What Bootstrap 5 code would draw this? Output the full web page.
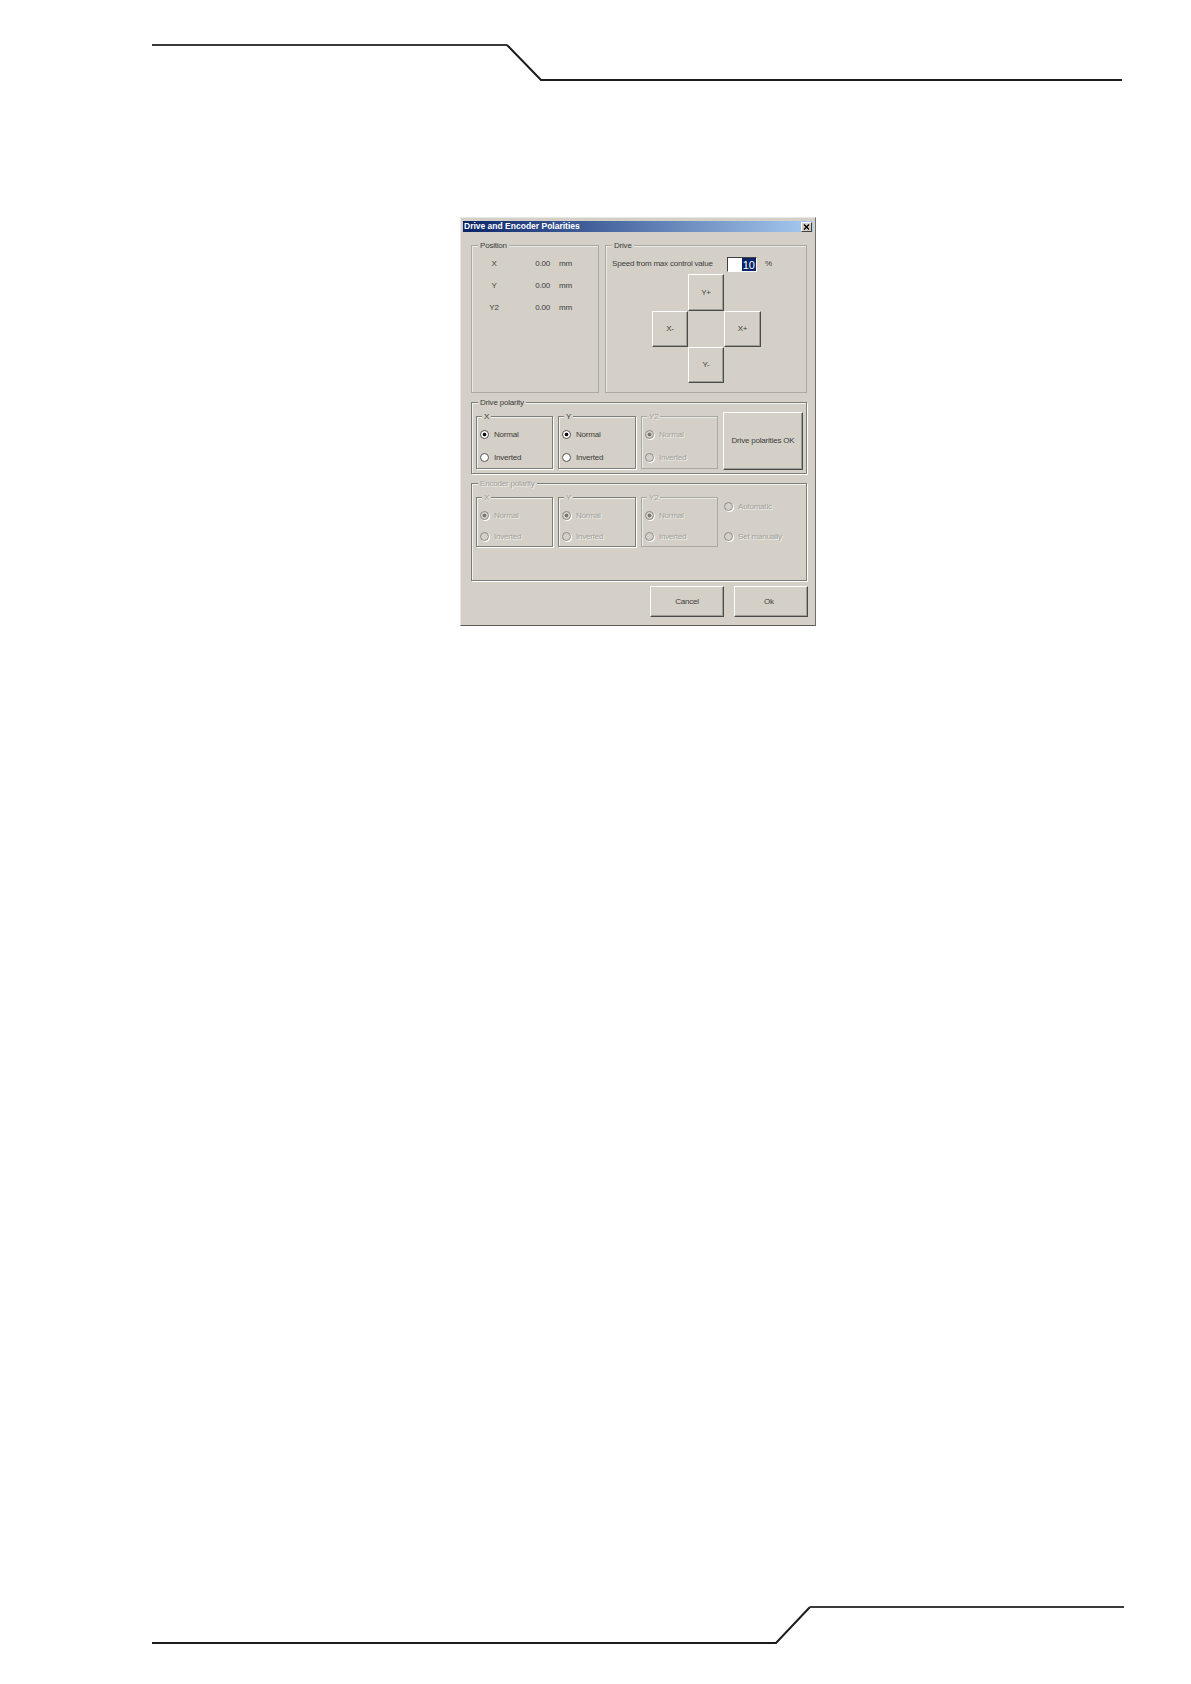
<!DOCTYPE html>
<html lang="en">
<head>
<meta charset="utf-8">
<title>Drive and Encoder Polarities</title>
<link href="https://cdn.jsdelivr.net/npm/bootstrap@5.3.0/dist/css/bootstrap.min.css" rel="stylesheet">
<style>
body{background:#fff;font-family:"Liberation Sans",Arial,sans-serif;font-size:8px;letter-spacing:-.2px;line-height:10px;color:#3c3c3a;min-height:1684px}
.deco{display:block;flex:none}
.deco-top{width:1191px;height:100px}
.deco-bottom{width:1191px;height:84px;margin-top:auto}
.win{width:356px;height:409px;margin:117px 0 0 460px;background:#d4d0c8;border:1px solid;border-color:#e9e8e3 #6e6e6a #5c5c58 #e9e8e3;padding:3px 2px 0}
.win-title{height:11px;background:linear-gradient(90deg,#0a246a,#a6caf0);color:#fff;font-weight:700;font-size:8.5px;letter-spacing:0;line-height:10px;padding-right:1px}
.win-title-text{padding:0 0 2px 1px}
.win-x{width:11px;height:10px;background:#d4d0c8;border:1px solid;border-color:#fff #404040 #404040 #fff;color:#000}
.win-body{padding:13px 6px 0 8px}
.grp{flex:none;border:1px solid #7d7d78;box-shadow:1px 1px 0 #fff,inset 1px 1px 0 #f2f1ed}
.grp-soft{border-color:#a9a8a1;box-shadow:inset 1px 1px 0 #eceae5}
.grp-title{display:block;width:fit-content;height:10px;margin:-6px 0 0 6px;padding:1px 2px 0;background:#d4d0c8}
.pos{width:128px;height:148px}
.drv{width:202px;height:148px}
.pos-row{height:22px}
.pos-name{width:44px}
.pos-val{width:34px;margin-right:9px}
.rows{margin-top:3px}
.speed{height:16px;margin:6px 0 0 6px}
.speed-label{width:115px}
.speed-input{width:30px;height:15px;background:#fff;border:1px solid;border-color:#404040 #fff #fff #404040;margin-right:8px}
.speed-sel{background:#0a246a;color:#fff;font-size:11px;letter-spacing:0;padding:0 1px 0 1px;line-height:14px}
.cross{display:grid;grid-template-columns:36px 36px 37px;grid-template-rows:37px 36px 36px;margin:2px 0 0 46px;width:fit-content}
.wbtn{background:#d4d0c8;border:1px solid;border-color:#fff #4a4a48 #4a4a48 #fff;border-radius:0;color:#3c3c3a;font-size:8px;letter-spacing:-.2px;line-height:10px;padding:0;box-shadow:inset -1px -1px 0 #a09e98}
.cell-a{grid-area:1/2}
.cell-b{grid-area:2/1}
.cell-c{grid-area:2/3}
.cell-d{grid-area:3/2}
.band{margin-top:9px}
.band-drive{height:72px}
.band-enc{height:98px}
.sub-row{padding-left:4px;gap:5px}
.sub{width:77px;margin-top:9px;height:53px}
.sub-wide{width:78px}
.sub-enc{height:50px}
.sub .grp-title{margin-left:5px}
.ok-drive{width:80px;height:58px;margin-top:5px}
.opts{padding:6px 0 0 3px;gap:9px}
.opts-enc{gap:7px}
.opts-free{width:80px;margin-top:11px;padding-left:1px;gap:16px}
.opt{height:14px;margin:0;gap:5px;padding-top:2px}
.rb{appearance:none;-webkit-appearance:none;flex:none;width:9px;height:9px;margin:0 0 2px;border-radius:50%;border:1px solid #55554f;background:#fff}
.rb:checked{background:radial-gradient(circle,#111 0 1.6px,#fff 2.2px)}
.rb:disabled{background:#d4d0c8;border-color:#8c8c86;box-shadow:1px 1px 0 #fff}
.rb:disabled:checked{background:radial-gradient(circle,#77776f 0 1.6px,#d4d0c8 2.2px)}
.off{color:#a3a29b;text-shadow:1px 1px 0 #efeeea}
.foot{margin:5px -1px 0 0;gap:10px}
.foot-btn{width:74px;height:31px}
</style>
</head>
<body class="d-flex flex-column">
<svg class="deco deco-top" viewBox="0 0 1191 100" aria-hidden="true"><path d="M152 45H507" fill="none" stroke="#3a3a3a" stroke-width="2"/><path d="M507 45 541 80H1122" fill="none" stroke="#1c1c1c" stroke-width="2"/></svg>

<div class="win">
  <div class="win-title d-flex justify-content-between align-items-center">
    <span class="win-title-text">Drive and Encoder Polarities</span>
    <span class="win-x d-flex"><svg viewBox="0 0 9 8" width="9" height="8" aria-hidden="true"><path d="M2 1.5 7 6.5M7 1.5 2 6.5" stroke="#000" stroke-width="1.4" fill="none"/></svg></span>
  </div>
  <div class="win-body">
    <div class="d-flex justify-content-between">
      <div class="grp grp-soft pos">
        <span class="grp-title">Position</span>
        <div class="rows">
          <div class="pos-row d-flex align-items-center"><span class="pos-name text-center">X</span><span class="pos-val text-end">0.00</span><span>mm</span></div>
          <div class="pos-row d-flex align-items-center"><span class="pos-name text-center">Y</span><span class="pos-val text-end">0.00</span><span>mm</span></div>
          <div class="pos-row d-flex align-items-center"><span class="pos-name text-center">Y2</span><span class="pos-val text-end">0.00</span><span>mm</span></div>
        </div>
      </div>
      <div class="grp grp-soft drv">
        <span class="grp-title">Drive</span>
        <div class="speed d-flex align-items-center">
          <span class="speed-label">Speed from max control value</span>
          <span class="speed-input d-flex justify-content-end"><span class="speed-sel">10</span></span>
          <span>%</span>
        </div>
        <div class="cross">
          <button type="button" class="btn wbtn cell-a">Y+</button>
          <button type="button" class="btn wbtn cell-b">X-</button>
          <button type="button" class="btn wbtn cell-c">X+</button>
          <button type="button" class="btn wbtn cell-d">Y-</button>
        </div>
      </div>
    </div>

    <div class="grp band band-drive">
      <span class="grp-title">Drive polarity</span>
      <div class="d-flex sub-row align-items-start">
        <div class="grp sub">
          <span class="grp-title">X</span>
          <div class="opts d-flex flex-column">
            <label class="opt d-flex align-items-center"><input class="rb" type="radio" name="dx" checked>Normal</label>
            <label class="opt d-flex align-items-center"><input class="rb" type="radio" name="dx">Inverted</label>
          </div>
        </div>
        <div class="grp sub sub-wide">
          <span class="grp-title">Y</span>
          <div class="opts d-flex flex-column">
            <label class="opt d-flex align-items-center"><input class="rb" type="radio" name="dy" checked>Normal</label>
            <label class="opt d-flex align-items-center"><input class="rb" type="radio" name="dy">Inverted</label>
          </div>
        </div>
        <div class="grp grp-soft sub">
          <span class="grp-title off">Y2</span>
          <div class="opts d-flex flex-column">
            <label class="opt off d-flex align-items-center"><input class="rb" type="radio" name="dz" checked disabled>Normal</label>
            <label class="opt off d-flex align-items-center"><input class="rb" type="radio" name="dz" disabled>Inverted</label>
          </div>
        </div>
        <button type="button" class="btn wbtn ok-drive">Drive polarities OK</button>
      </div>
    </div>

    <div class="grp band band-enc">
      <span class="grp-title off">Encoder polarity</span>
      <div class="d-flex sub-row align-items-start">
        <div class="grp sub sub-enc">
          <span class="grp-title off">X</span>
          <div class="opts opts-enc d-flex flex-column">
            <label class="opt off d-flex align-items-center"><input class="rb" type="radio" name="ex" checked disabled>Normal</label>
            <label class="opt off d-flex align-items-center"><input class="rb" type="radio" name="ex" disabled>Inverted</label>
          </div>
        </div>
        <div class="grp sub sub-wide sub-enc">
          <span class="grp-title off">Y</span>
          <div class="opts opts-enc d-flex flex-column">
            <label class="opt off d-flex align-items-center"><input class="rb" type="radio" name="ey" checked disabled>Normal</label>
            <label class="opt off d-flex align-items-center"><input class="rb" type="radio" name="ey" disabled>Inverted</label>
          </div>
        </div>
        <div class="grp grp-soft sub sub-enc">
          <span class="grp-title off">Y2</span>
          <div class="opts opts-enc d-flex flex-column">
            <label class="opt off d-flex align-items-center"><input class="rb" type="radio" name="ez" checked disabled>Normal</label>
            <label class="opt off d-flex align-items-center"><input class="rb" type="radio" name="ez" disabled>Inverted</label>
          </div>
        </div>
        <div class="opts-free d-flex flex-column">
          <label class="opt off d-flex align-items-center"><input class="rb" type="radio" name="em" disabled>Automatic</label>
          <label class="opt off d-flex align-items-center"><input class="rb" type="radio" name="em" disabled>Set manually</label>
        </div>
      </div>
    </div>

    <div class="foot d-flex justify-content-end">
      <button type="button" class="btn wbtn foot-btn">Cancel</button>
      <button type="button" class="btn wbtn foot-btn pe-1">Ok</button>
    </div>
  </div>
</div>

<svg class="deco deco-bottom" viewBox="0 0 1191 84" aria-hidden="true"><path d="M152 43H776L810 7" fill="none" stroke="#1c1c1c" stroke-width="2"/><path d="M810 7H1124" fill="none" stroke="#3a3a3a" stroke-width="2"/></svg>
<script src="https://cdn.jsdelivr.net/npm/bootstrap@5.3.0/dist/js/bootstrap.bundle.min.js"></script>
</body>
</html>
